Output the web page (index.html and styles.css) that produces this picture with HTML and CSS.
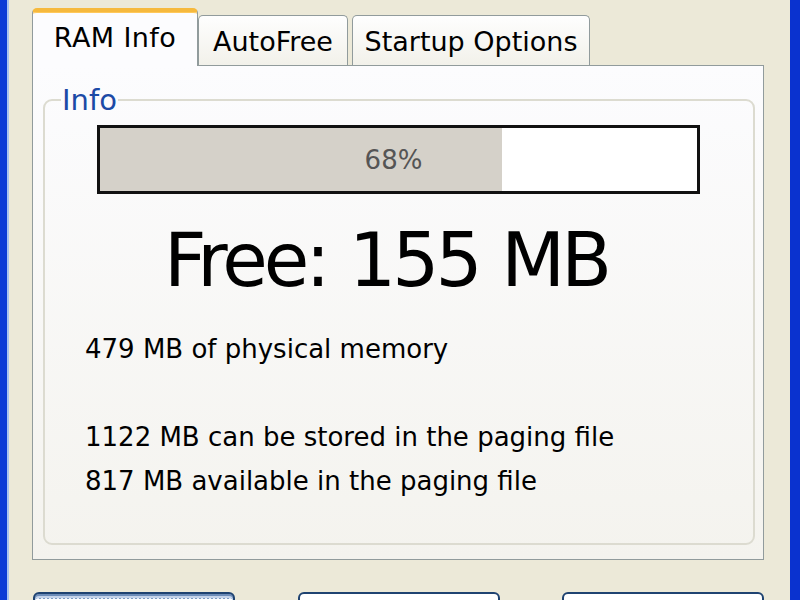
FILE: index.html
```html
<!DOCTYPE html>
<html>
<head>
    <meta charset="UTF-8">
    <title>RAM Info</title>
    <link rel="stylesheet" href="styles.css">
</head>
<body>
    <div class="frame">
        <div class="dialog">
            <div class="tabs">
                <div class="tab tab-active">RAM Info</div>
                <div class="tab tab-auto">AutoFree</div>
                <div class="tab tab-startup">Startup Options</div>
            </div>

            <div class="panel">
                <fieldset class="group">
                    <legend>Info</legend>

                    <div class="progress">
                        <div class="progress-fill" style="width: 67.4%;"></div>
                        <div class="progress-label">68%</div>
                    </div>

                    <div class="free">Free: 155 MB</div>

                    <div class="stats">
                        <div class="line">479 MB of physical memory</div>
                        <div class="line"></div>
                        <div class="line">1122 MB can be stored in the paging file</div>
                        <div class="line">817 MB available in the paging file</div>
                    </div>
                </fieldset>
            </div>

            <!-- only the top edges of the buttons are in view -->
            <div class="buttons">
                <button class="btn btn-default"></button>
                <button class="btn"></button>
                <button class="btn"></button>
            </div>
        </div>
    </div>
</body>
</html>
```

FILE: styles.css
```css
body {
    margin: 0;
    width: 800px;
    height: 600px;
    overflow: hidden;
    background: #ece9d8;
    font-family: "DejaVu Sans", Tahoma, sans-serif;
    color: #000;
}

.frame {
    height: 600px;
    box-sizing: border-box;
    border-left: 7px solid #0b3bd6;
    border-right: 10px solid #0a32cf;
    box-shadow: inset 2px 0 0 #a9c4f0;
    overflow: hidden;
}

.dialog {
    padding: 8px 26px 0 25px;
}

/* tabs */
.tabs {
    display: flex;
    align-items: flex-end;
    height: 57px;
    position: relative;
    z-index: 1;
}

.tab {
    box-sizing: border-box;
    height: 50px;
    border: 1px solid #919b9c;
    border-bottom: none;
    border-radius: 5px 5px 0 0;
    background: linear-gradient(#fefefe, #f2f1ea);
    font-size: 27px;
    display: flex;
    align-items: center;
    justify-content: center;
    padding-top: 2px;
}

.tab-active {
    width: 166px;
    height: 58px;
    margin-bottom: -1px;
    background: #fcfcfe;
    border-top: 4px solid #f6b93d;
    box-shadow: inset 0 1px 0 #ffc85a;
    padding-top: 0;
    padding-bottom: 4px;
    letter-spacing: 0.4px;
}

.tab-auto {
    width: 150px;
    margin-right: 4px;
}

.tab-startup {
    width: 238px;
}

/* panel */
.panel {
    box-sizing: border-box;
    height: 495px;
    border: 1px solid #919b9c;
    background: linear-gradient(#fcfcfe, #f4f3ee);
    padding: 20px 8px 14px 10px;
}

.group {
    box-sizing: border-box;
    height: 100%;
    margin: 0;
    border: 2px solid #dcdbd0;
    border-radius: 9px;
    padding: 0 0 0 40px;
}

.group legend {
    color: #1c4aa6;
    font-size: 29px;
    padding: 0 1px;
    margin-left: -24px;
    line-height: 28px;
}

/* progress bar */
.progress {
    position: relative;
    box-sizing: border-box;
    width: 603px;
    height: 69px;
    margin: 11px 0 0 12px;
    border: 3px solid #111;
    background: #fff;
}

.progress-fill {
    height: 100%;
    background: #d5d1c9;
}

.progress-label {
    position: absolute;
    top: 0;
    left: 0;
    right: 0;
    bottom: 0;
    display: flex;
    align-items: center;
    justify-content: center;
    font-size: 26px;
    color: #555;
    padding-right: 10px;
}

.free {
    font-size: 74px;
    line-height: 90px;
    margin-top: 21px;
    padding-left: 79px;
    letter-spacing: -3.9px;
    word-spacing: 3px;
}

.stats {
    margin-top: 22px;
    font-size: 26px;
}

.line {
    height: 44px;
    line-height: 44px;
}

/* bottom buttons */
.buttons {
    display: flex;
    justify-content: space-between;
    margin-top: 32px;
}

.btn {
    width: 202px;
    height: 40px;
    border: 2px solid #1f4371;
    border-radius: 6px;
    background: #fff;
}

.btn-default {
    margin-left: 1px;
    box-shadow: inset 0 2px 0 #6c8cb8, inset 0 4px 0 #c4d3ea;
    background: repeating-linear-gradient(90deg, #7d9bc4 0 2px, #e6eef8 2px 4px) top / 100% 5px no-repeat, #fff;
}
```
